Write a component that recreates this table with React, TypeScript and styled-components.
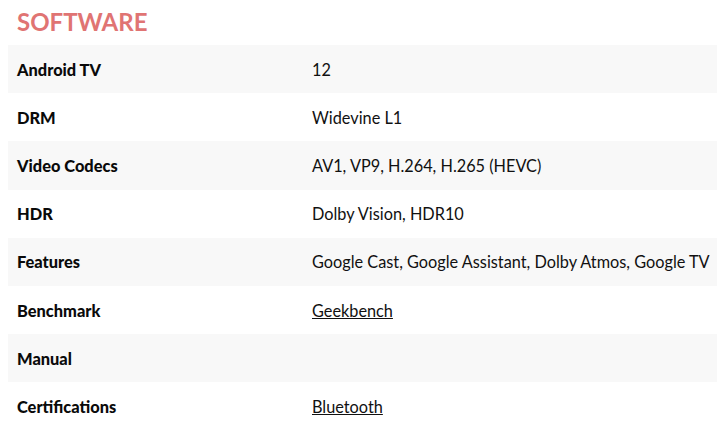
import React from "react";
import styled, { createGlobalStyle } from "styled-components";

const Global = createGlobalStyle`
  html, body { margin: 0; padding: 0; background: #fff; }
  body { font-family: Lato, "Noto Sans", sans-serif; color: #111; }
`;

const Page = styled.div`
  padding: 6px 0 0 8px;
`;

const Title = styled.h2`
  margin: 0 0 7px 9px;
  font-size: 24px;
  line-height: 32px;
  font-weight: 700;
  color: #e07473;
`;

const Table = styled.div`
  display: flex;
  flex-direction: column;
`;

const Row = styled.div<{ $shaded: boolean }>`
  display: grid;
  grid-template-columns: 295px 1fr;
  height: 48.2px;
  align-items: center;
  background: ${(p) => (p.$shaded ? "#f8f8f8" : "#fff")};
`;

const Label = styled.div`
  padding-left: 9px;
  font-size: 16.4px;
  font-weight: 900;
  color: #0a0a0a;
  white-space: nowrap;
`;

const Value = styled.div`
  padding-left: 9px;
  font-size: 16.3px;
  white-space: nowrap;
`;

const Link = styled.a`
  color: #111;
  text-decoration: underline;
`;

const rows: { label: string; value?: string; link?: boolean }[] = [
  { label: "Android TV", value: "12" },
  { label: "DRM", value: "Widevine L1" },
  { label: "Video Codecs", value: "AV1, VP9, H.264, H.265 (HEVC)" },
  { label: "HDR", value: "Dolby Vision, HDR10" },
  { label: "Features", value: "Google Cast, Google Assistant, Dolby Atmos, Google TV" },
  { label: "Benchmark", value: "Geekbench", link: true },
  { label: "Manual" },
  { label: "Certifications", value: "Bluetooth", link: true },
];

export default function App() {
  return (
    <>
      <Global />
      <Page>
        <Title>SOFTWARE</Title>
        <Table>
          {rows.map((r, i) => (
            <Row key={r.label} $shaded={i % 2 === 0}>
              <Label>{r.label}</Label>
              <Value>{r.link ? <Link href="#">{r.value}</Link> : r.value}</Value>
            </Row>
          ))}
        </Table>
      </Page>
    </>
  );
}
